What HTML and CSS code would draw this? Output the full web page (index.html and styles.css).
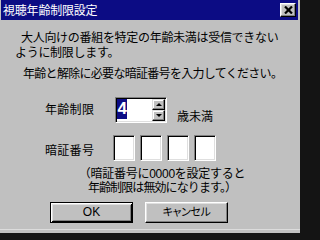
FILE: index.html
```html
<!DOCTYPE html>
<html lang="ja">
<head>
<meta charset="utf-8">
<title>視聴年齢制限設定</title>
<link rel="stylesheet" href="styles.css">
</head>
<body>
<div class="win">
  <div class="titlebar">
    <span class="title">視聴年齢制限設定</span>
    <span class="close"><svg width="9" height="8" viewBox="0 0 9 8"><path d="M1 0.5 L8 7.5 M8 0.5 L1 7.5" stroke="#000" stroke-width="2.2" fill="none"/></svg></span>
  </div>
  <div class="client">
    <div class="msg">
      <div class="line l1">大人向けの番組を特定の年齢未満は受信できない</div>
      <div class="line l2">ように制限します。</div>
    </div>
    <div class="line msg2">年齢と解除に必要な暗証番号を入力してください。</div>
    <div class="row age-row">
      <span class="label">年齢制限</span>
      <div class="spin-edit">
        <div class="edit"><span class="sel">4</span></div>
        <div class="spin">
          <span class="spin-btn"><i class="arrow-up"></i></span>
          <span class="spin-btn"><i class="arrow-down"></i></span>
        </div>
      </div>
      <span class="unit">歳未満</span>
    </div>
    <div class="row pin-row">
      <span class="label pin-label">暗証番号</span>
      <div class="pins">
        <span class="pin"></span>
        <span class="pin"></span>
        <span class="pin"></span>
        <span class="pin"></span>
      </div>
    </div>
    <div class="note">
      <div class="nline n1">（暗証番号に0000を設定すると</div>
      <div class="nline n2">年齢制限は無効になります。）</div>
    </div>
    <div class="buttons">
      <button class="btn default">OK</button>
      <button class="btn cancel">キャンセル</button>
    </div>
  </div>
</div>
</body>
</html>
```
FILE: styles.css
```css
html, body {
  margin: 0;
  padding: 0;
}
body {
  width: 300px;
  height: 237px;
  overflow: hidden;
  background: #141414;
  font-family: "Liberation Sans", "Noto Sans CJK JP", sans-serif;
  font-size: 12px;
  color: #000;
}
.win {
  width: 300px;
  height: 233px;
  background: #c0c0c0;
  box-shadow: inset 0 -3px #c0c0c0, inset 0 -4px #dcdcdc;
  overflow: hidden;
}
.titlebar {
  height: 20px;
  margin: 0 2px 0 1px;
  background: #0c0c84;
  color: #fff;
  display: flex;
  align-items: center;
  justify-content: space-between;
}
.title {
  padding: 2px 0 0 2px;
  line-height: 20px;
  letter-spacing: -0.2px;
}
.close {
  width: 16px;
  height: 14px;
  margin-right: 2px;
  box-sizing: border-box;
  background: #c0c0c0;
  border: 1px solid;
  border-color: #fff #000 #000 #fff;
  box-shadow: inset -1px -1px #808080, inset 1px 1px #dfdfdf;
  display: flex;
  align-items: center;
  justify-content: center;
}
.close svg {
  display: block;
}
.client {
  padding: 11px 0 0 15px;
}
.line {
  height: 15px;
  line-height: 15px;
  white-space: nowrap;
}
.l1 {
  padding-left: 6px;
  letter-spacing: -0.3px;
}
.l2 {
  letter-spacing: -0.3px;
}
.msg2 {
  margin: 6px 0 0 8px;
  letter-spacing: -0.7px;
}
.row {
  display: flex;
  align-items: center;
}
.age-row {
  margin-top: 15px;
  height: 26px;
}
.label {
  width: 70px;
  padding: 1px 0 0 30px;
  line-height: 15px;
  letter-spacing: 0.3px;
}
.spin-edit {
  width: 52px;
  height: 26px;
  box-sizing: border-box;
  display: flex;
  border: 1px solid;
  border-color: #808080 #fff #fff #808080;
  box-shadow: inset 1px 1px #000, inset -1px -1px #dfdfdf;
  padding: 1px;
  background: #fff;
}
.edit {
  flex: 1;
  background: #fff;
}
.sel {
  display: inline-block;
  background: #0c0c84;
  color: #fff;
  font-family: "Liberation Sans", Arial, sans-serif;
  font-weight: bold;
  font-size: 17px;
  line-height: 20px;
  padding: 0 0.5px;
  vertical-align: top;
}
.spin {
  width: 13px;
  display: flex;
  flex-direction: column;
}
.spin-btn {
  flex: 1;
  background: #c0c0c0;
  box-sizing: border-box;
  border: 1px solid;
  border-color: #dfdfdf #000 #000 #dfdfdf;
  box-shadow: inset -1px -1px #808080, inset 1px 1px #fff;
  display: flex;
  align-items: center;
  justify-content: center;
}
.arrow-up, .arrow-down {
  display: block;
  width: 0;
  height: 0;
  border-left: 3px solid transparent;
  border-right: 3px solid transparent;
}
.arrow-up {
  border-bottom: 3px solid #000;
}
.arrow-down {
  border-top: 3px solid #000;
}
.unit {
  align-self: flex-end;
  margin: 0 0 -2px 10px;
  line-height: 15px;
}
.pin-row {
  margin-top: 12px;
  height: 26px;
}
.pin-label {
  width: 68px;
  margin-top: 6px;
}
.pins {
  display: flex;
  gap: 5px;
}
.pin {
  width: 22px;
  height: 26px;
  box-sizing: border-box;
  background: #fff;
  border: 1px solid;
  border-color: #808080 #fff #fff #808080;
  box-shadow: inset 1px 1px #000, inset -1px -1px #dfdfdf;
}
.note {
  margin: 6px 0 0 47px;
  width: 200px;
  text-align: center;
}
.nline {
  height: 14px;
  line-height: 14px;
  white-space: nowrap;
}
.n1 {
  letter-spacing: -0.25px;
}
.n2 {
  letter-spacing: -0.9px;
}
.buttons {
  margin: 7px 0 0 35px;
  display: flex;
  gap: 12px;
}
.btn {
  width: 83px;
  height: 21px;
  padding: 0;
  box-sizing: border-box;
  background: #c0c0c0;
  font-family: "Liberation Sans", "Noto Sans CJK JP", sans-serif;
  font-size: 12px;
  color: #000;
  line-height: 15px;
  border: 1px solid;
  border-color: #fff #000 #000 #fff;
  box-shadow: inset -1px -1px #808080, inset 1px 1px #dfdfdf;
}
.btn.default {
  border-color: #000;
  box-shadow: inset 1px 1px #fff, inset -1px -1px #000, inset 2px 2px #dfdfdf, inset -2px -2px #808080;
}
.btn.cancel {
  font-size: 11px;
  font-feature-settings: "palt";
  letter-spacing: -0.4px;
}
```
